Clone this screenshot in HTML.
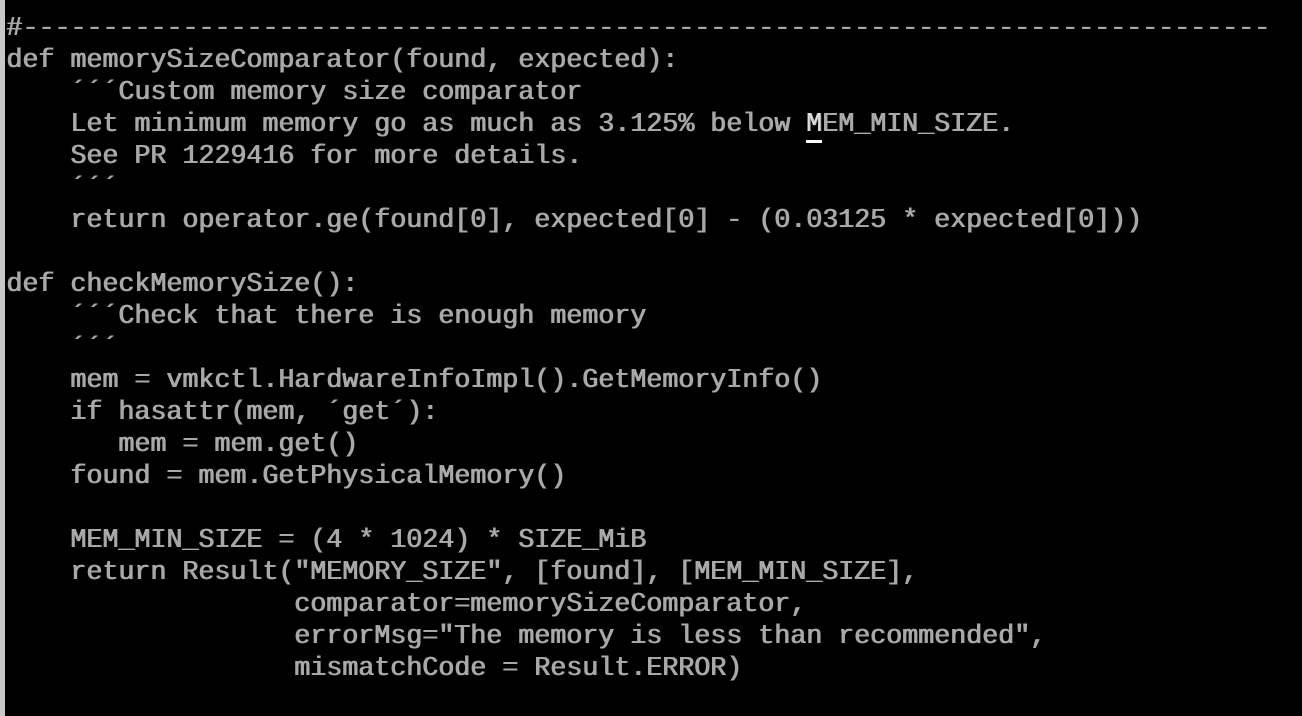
<!DOCTYPE html>
<html><head><style>
html,body{margin:0;padding:0;background:#000;width:1302px;height:716px;overflow:hidden}
.bar{position:absolute;left:0;top:0;width:5px;height:716px;background:#c8c8c8}
pre{position:absolute;left:6px;top:13px;margin:0;font-family:"Liberation Mono",monospace;font-size:26.67px;line-height:32px;color:#a8a8a8;letter-spacing:0;text-shadow:1px 0 0 #a8a8a8}
.c{border-bottom:3px solid #fff;color:#ddd}
</style></head><body>
<div class="bar"></div>
<pre>#------------------------------------------------------------------------------
def memorySizeComparator(found, expected):
    ´´´Custom memory size comparator
    Let minimum memory go as much as 3.125% below <span class="c">M</span>EM_MIN_SIZE.
    See PR 1229416 for more details.
    ´´´
    return operator.ge(found[0], expected[0] - (0.03125 * expected[0]))

def checkMemorySize():
    ´´´Check that there is enough memory
    ´´´
    mem = vmkctl.HardwareInfoImpl().GetMemoryInfo()
    if hasattr(mem, ´get´):
       mem = mem.get()
    found = mem.GetPhysicalMemory()

    MEM_MIN_SIZE = (4 * 1024) * SIZE_MiB
    return Result("MEMORY_SIZE", [found], [MEM_MIN_SIZE],
                  comparator=memorySizeComparator,
                  errorMsg="The memory is less than recommended",
                  mismatchCode = Result.ERROR)
</pre>
</body></html>
